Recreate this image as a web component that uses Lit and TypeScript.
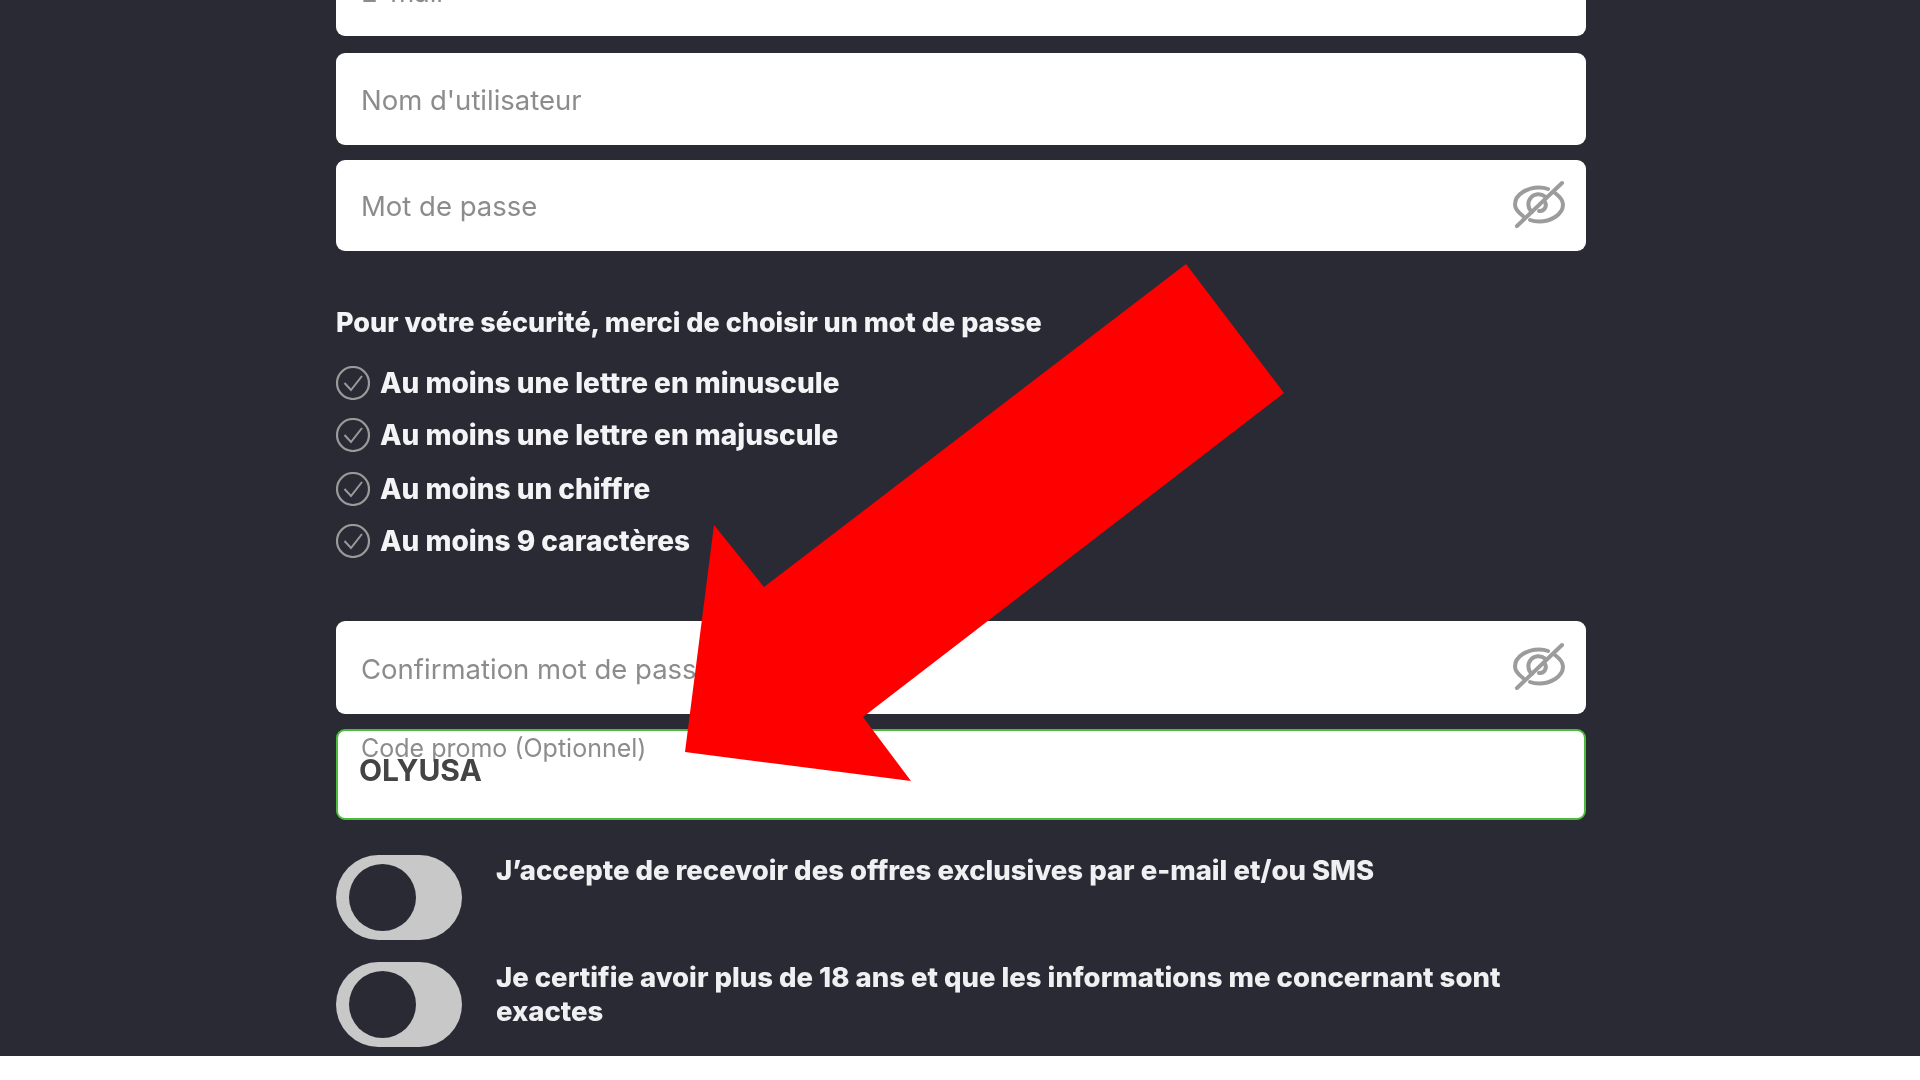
import { LitElement, html, css, svg } from "lit";
import { customElement } from "lit/decorators.js";

const eye = html`<svg class="eye" viewBox="0 0 54 48" fill="none" stroke="#9c9c9c" stroke-width="4" stroke-linecap="round">
  <path d="M11 36Q3 30 3 24.5C3 14 16 7.5 27 7.5Q32 7.5 36 9"/>
  <path d="M43 13Q51 19 51 24.5C51 35 38 41.5 27 41.5Q22 41.5 18 40"/>
  <path d="M20 32A10 10 0 0 1 33 16.5"/>
  <path d="M33 22A6 6 0 0 1 27 31"/>
  <path d="M5 46L50 3"/>
</svg>`;

const check = html`<svg class="check" viewBox="0 0 34 34" fill="none" stroke="#9a9a9a">
  <circle cx="17" cy="17" r="16" stroke-width="2.2"/>
  <path d="M8.5 17L15 24L26 10" stroke-width="2"/>
</svg>`;

@customElement("app-root")
export class AppRoot extends LitElement {
  static styles = css`
    :host { display: block; width: 1920px; height: 1080px; background: #fff; overflow: hidden; }
    .stage { position: relative; height: 1056px; background: #2a2a35; overflow: hidden; }
    .form { display: flex; flex-direction: column; width: 1250px; margin: -55px 0 0 336px; filter: blur(0.5px); font-family: "Inter", sans-serif; }
    .field { display: flex; align-items: center; justify-content: space-between; box-sizing: border-box; background: #fff; border-radius: 9px; padding: 2px 20px 0 25px; font-size: 27.5px; color: #8c8c8c; flex: none; }
    .f0 { height: 91px; }
    .f1 { height: 92px; margin-top: 17px; }
    .f2 { height: 91.5px; margin-top: 14.5px; }
    .f3 { height: 93px; margin-top: 63px; }
    .promo { display: block; height: 91px; margin-top: 15px; border: 2.5px solid #4dbb3c; padding: 5px 0 0 23px; }
    .label { line-height: 24px; font-size: 25px; }
    .code { margin: -1px 0 0 -2px; font: 700 30px/22px "Inter", sans-serif; color: #444; }
    .eye { width: 54px; height: 48px; flex: none; margin: 0 0 5px; }
    h2 { margin: 55px 0 26px; font-size: 27px; line-height: 34px; font-weight: 800; color: #f4f4f6; }
    .rules { display: flex; flex-direction: column; gap: 18px; }
    .rule { display: flex; align-items: center; gap: 10px; height: 34px; font-size: 28px; font-weight: 800; color: #f4f4f6; }
    .rule.third { margin-top: 2px; }
    .check { width: 34px; height: 34px; flex: none; }
    .toggles { display: flex; flex-direction: column; gap: 22px; margin-top: 35px; }
    .row { display: flex; gap: 34px; align-items: flex-start; }
    .toggle { display: flex; align-items: center; box-sizing: border-box; width: 126px; height: 85px; padding-left: 13px; border-radius: 43px; background: #c8c8c8; flex: none; }
    .knob { width: 67px; height: 67px; border-radius: 50%; background: #2a2a35; }
    .txt { margin-top: -2px; font: 800 27.5px/34px "Inter", sans-serif; color: #f0f0f2; }
    .arrow { position: absolute; left: 0; top: 0; width: 1920px; height: 1056px; pointer-events: none; }
  `;

  render() {
    const rules = ["Au moins une lettre en minuscule", "Au moins une lettre en majuscule", "Au moins un chiffre", "Au moins 9 caractères"];
    return html`<div class="stage">
      <div class="form">
        <div class="field f0">E-mail</div>
        <div class="field f1">Nom d'utilisateur</div>
        <div class="field f2">Mot de passe ${eye}</div>
        <h2>Pour votre sécurité, merci de choisir un mot de passe</h2>
        <div class="rules">
          ${rules.map((r, i) => html`<div class="rule ${i === 2 ? "third" : ""}">${check}<span>${r}</span></div>`)}
        </div>
        <div class="field f3">Confirmation mot de passe ${eye}</div>
        <div class="field promo">
          <div class="label">Code promo (Optionnel)</div>
          <div class="code">OLYUSA</div>
        </div>
        <div class="toggles">
          <div class="row"><div class="toggle"><div class="knob"></div></div><div class="txt">J’accepte de recevoir des offres exclusives par e-mail et/ou SMS</div></div>
          <div class="row"><div class="toggle"><div class="knob"></div></div><div class="txt">Je certifie avoir plus de 18 ans et que les informations me concernant sont exactes</div></div>
        </div>
      </div>
      <svg class="arrow" viewBox="0 0 1920 1056">${svg`<polygon fill="#ff0000" points="1186,264 1284,393 863,717 911,781 685,752 714,525 764,587"/>`}</svg>
    </div>`;
  }
}
